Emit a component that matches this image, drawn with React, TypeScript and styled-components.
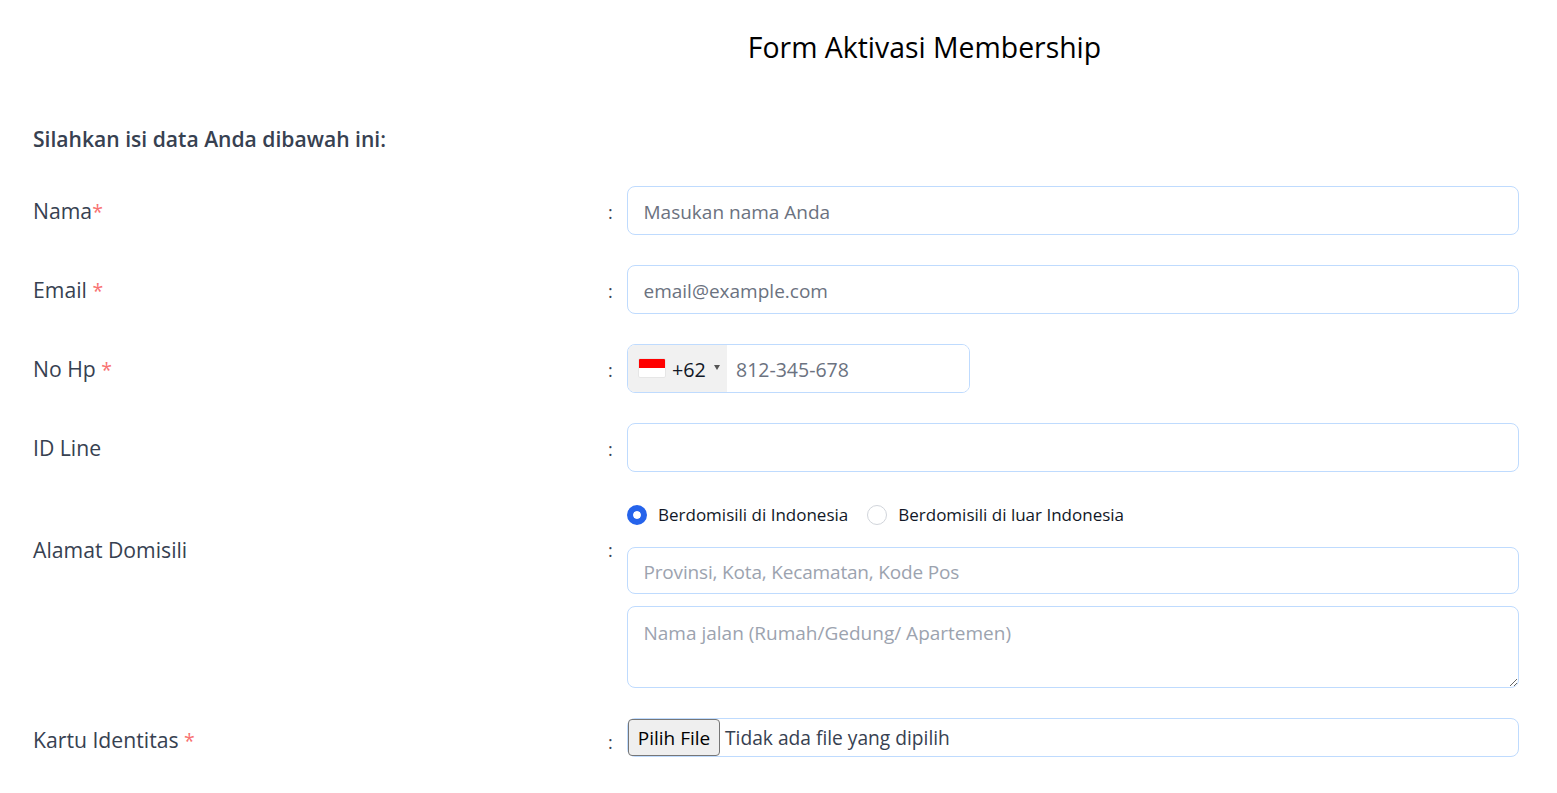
import React from "react";
import styled, { createGlobalStyle } from "styled-components";

const Global = createGlobalStyle`
  html, body { margin: 0; padding: 0; background: #fff; }
  body { font-family: "Open Sans", "Noto Sans", sans-serif; color: #374151; }
  * { box-sizing: border-box; }
  input::placeholder, textarea::placeholder { opacity: 1; }
`;

const Page = styled.div`
  width: 1557px;
  height: 793px;
  overflow: hidden;
  padding: 27px 38px 0 33px;
`;

const Title = styled.h1`
  margin: 0 0 0 297px;
  height: 40px;
  font-size: 28.4px;
  line-height: 40px;
  font-weight: 400;
  color: #000;
  text-align: center;
`;

const Intro = styled.h2`
  margin: 52px 0 27px;
  font-size: 21.1px;
  line-height: 40px;
  height: 40px;
  font-weight: 600;
  color: #374151;
`;

const Form = styled.form`
  display: flex;
  flex-direction: column;
  gap: 30px;
`;

const Row = styled.div`
  display: grid;
  grid-template-columns: 575px 19px 892px;
  align-items: center;
`;

const Label = styled.label<{ $mt?: number; $start?: boolean }>`
  font-size: 21.2px;
  line-height: 32px;
  color: #374151;
  margin-top: ${(p) => p.$mt ?? 1}px;
  align-self: ${(p) => (p.$start ? "start" : "center")};
`;

const Req = styled.span`
  color: #f87171;
  font-size: 19.5px;
`;

const Colon = styled.span<{ $mt?: number; $start?: boolean }>`
  font-size: 18px;
  line-height: 24px;
  color: #374151;
  margin-top: ${(p) => p.$mt ?? 3}px;
  align-self: ${(p) => (p.$start ? "start" : "center")};
`;

const fieldBorder = `
  border: 1px solid #bfdbfe;
  border-radius: 8px;
  outline: none;
  font-family: "Open Sans", "Noto Sans", sans-serif;
  font-size: 19px;
`;

const TextInput = styled.input<{ $h?: number; $light?: boolean; $ls?: number }>`
  ${fieldBorder}
  display: block;
  width: 100%;
  height: ${(p) => p.$h ?? 49}px;
  padding: 2px 15.5px 0;
  background: #fff;
  letter-spacing: ${(p) => p.$ls ?? 0}px;
  &::placeholder { color: ${(p) => (p.$light ? "#9ca3af" : "#6b7280")}; }
`;

const TextArea = styled.textarea`
  ${fieldBorder}
  display: block;
  width: 100%;
  height: 82px;
  padding: 12px 15.5px;
  line-height: 28px;
  resize: vertical;
  background: #fff;
  &::placeholder { color: #9ca3af; }
`;

const PhoneBox = styled.div`
  ${fieldBorder}
  display: flex;
  width: 343px;
  height: 49px;
  overflow: hidden;
  background: #fff;
`;

const Dial = styled.div`
  width: 99px;
  flex: none;
  background: #f1f1f1;
  display: flex;
  align-items: center;
  padding-left: 11px;
  color: #111827;
`;

const Flag = styled.span`
  width: 26px;
  height: 18px;
  flex: none;
  margin-top: -2px;
  background: linear-gradient(#ff0000 50%, #ffffff 50%);
  box-shadow: 0 0 1px rgba(0, 0, 0, 0.45);
  border-radius: 1px;
`;

const DialCode = styled.span`
  margin-left: 7px;
  font-size: 19.8px;
  line-height: 24px;
  padding-top: 2px;
`;

const Caret = styled.span`
  width: 0;
  height: 0;
  margin: -3px 0 0 8px;
  border-left: 3px solid transparent;
  border-right: 3px solid transparent;
  border-top: 5px solid #555;
`;

const PhoneInput = styled.input`
  flex: 1;
  min-width: 0;
  border: 0;
  outline: none;
  padding: 2px 9px 0;
  font-family: "Open Sans", "Noto Sans", sans-serif;
  font-size: 19.5px;
  &::placeholder { color: #6b7280; }
`;

const Stack = styled.div`
  display: flex;
  flex-direction: column;
  gap: 12px;
`;

const RadioRow = styled.div`
  display: flex;
  align-items: center;
  height: 26px;
  margin: 0 0 7px;
`;

const RadioLabel = styled.label`
  display: flex;
  align-items: center;
  gap: 11px;
  margin-right: 19px;
  font-size: 17px;
  line-height: 24px;
  color: #111827;
`;

const RadioDot = styled.span<{ $on?: boolean }>`
  width: 20px;
  height: 20px;
  border-radius: 50%;
  flex: none;
  background: ${(p) => (p.$on ? "#2563eb" : "#fff")};
  border: ${(p) => (p.$on ? "6px solid #2563eb" : "1px solid #d1d5db")};
  box-shadow: ${(p) => (p.$on ? "inset 0 0 0 10px #fff" : "none")};
`;

const FileBox = styled.div`
  ${fieldBorder}
  display: flex;
  align-items: center;
  height: 39px;
  color: #374151;
  background: #fff;
`;

const FileButton = styled.button`
  height: 37px;
  width: 92px;
  flex: none;
  padding: 0;
  background: #efefef;
  border: 1px solid #767676;
  border-radius: 4px;
  color: #000;
  font-family: inherit;
  font-size: 19px;
`;

const FileName = styled.span`
  margin-left: 5px;
  font-size: 19.2px;
  line-height: 24px;
`;

export default function App() {
  return (
    <Page>
      <Global />
      <Title>Form Aktivasi Membership</Title>
      <Intro>Silahkan isi data Anda dibawah ini:</Intro>
      <Form>
        <Row>
          <Label>Nama<Req>*</Req></Label>
          <Colon>:</Colon>
          <TextInput placeholder="Masukan nama Anda" />
        </Row>
        <Row>
          <Label>Email <Req>*</Req></Label>
          <Colon>:</Colon>
          <TextInput placeholder="email@example.com" />
        </Row>
        <Row>
          <Label>No Hp <Req>*</Req></Label>
          <Colon>:</Colon>
          <PhoneBox>
            <Dial>
              <Flag />
              <DialCode>+62</DialCode>
              <Caret />
            </Dial>
            <PhoneInput placeholder="812-345-678" />
          </PhoneBox>
        </Row>
        <Row>
          <Label>ID Line</Label>
          <Colon>:</Colon>
          <TextInput />
        </Row>
        <Row>
          <Label $start $mt={32}>Alamat Domisili</Label>
          <Colon $start $mt={36}>:</Colon>
          <Stack>
            <RadioRow>
              <RadioLabel><RadioDot $on />Berdomisili di Indonesia</RadioLabel>
              <RadioLabel><RadioDot />Berdomisili di luar Indonesia</RadioLabel>
            </RadioRow>
            <TextInput $h={47} $light $ls={-0.17} placeholder="Provinsi, Kota, Kecamatan, Kode Pos" />
            <TextArea placeholder="Nama jalan (Rumah/Gedung/ Apartemen)" />
          </Stack>
        </Row>
        <Row>
          <Label $mt={6}>Kartu Identitas <Req>*</Req></Label>
          <Colon $mt={8}>:</Colon>
          <FileBox>
            <FileButton type="button">Pilih File</FileButton>
            <FileName>Tidak ada file yang dipilih</FileName>
          </FileBox>
        </Row>
      </Form>
    </Page>
  );
}
